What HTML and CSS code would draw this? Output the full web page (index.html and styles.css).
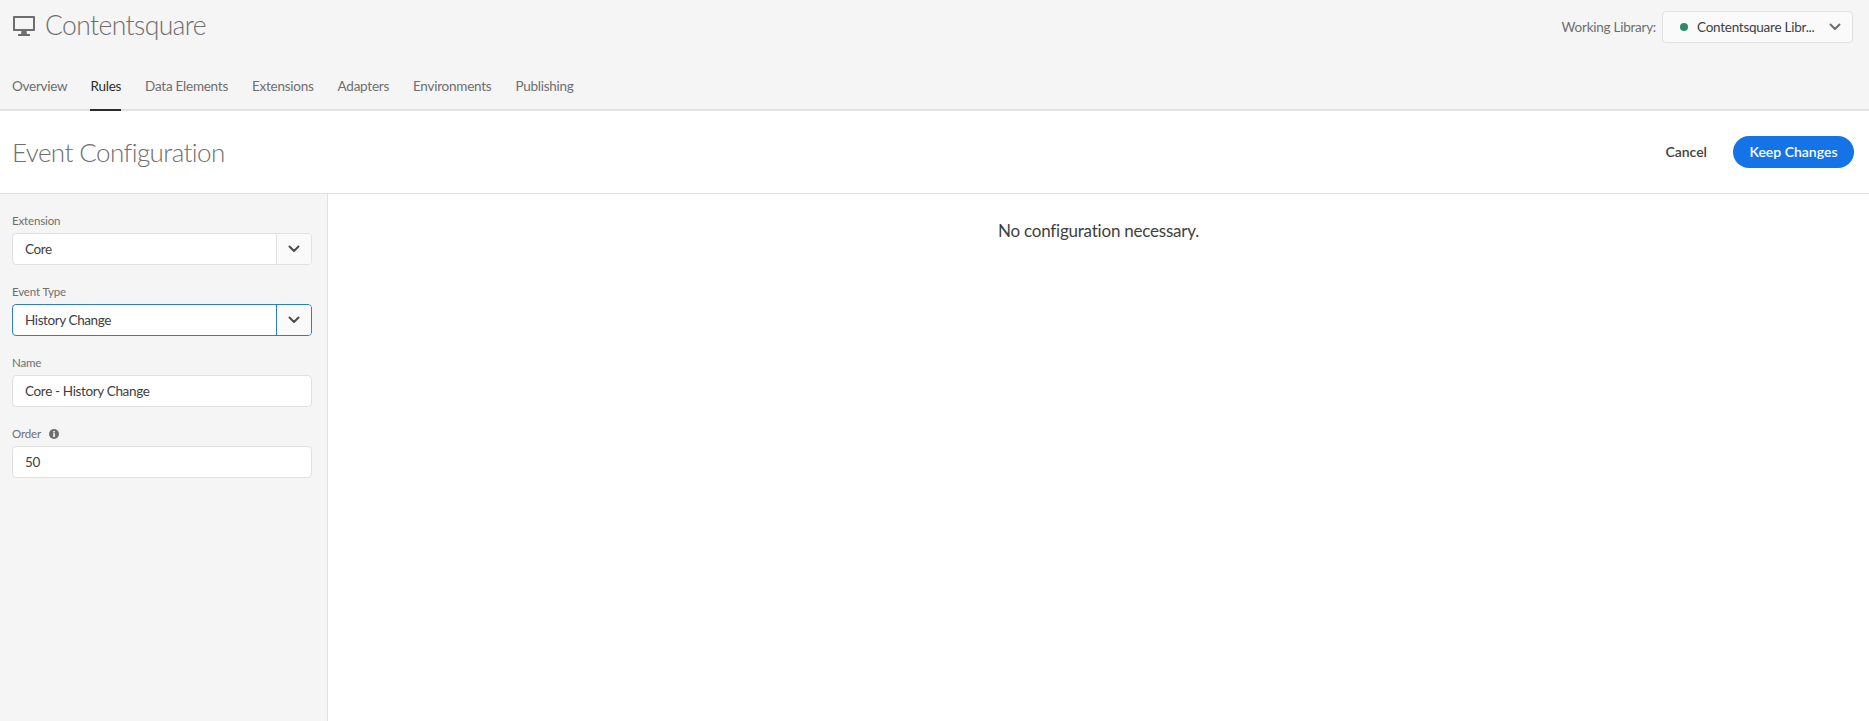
FILE: index.html
```html
<!DOCTYPE html>
<html lang="en">
<head>
<meta charset="utf-8">
<title>Event Configuration</title>
<link rel="stylesheet" href="styles.css">
</head>
<body>
<header class="topbar">
  <div class="topbar-row">
    <div class="brand">
      <svg class="brand-icon" width="22" height="20" viewBox="0 0 22 20"><path fill="#6e6e6e" fill-rule="evenodd" d="M1 0h20c.6 0 1 .4 1 1v13c0 .6-.4 1-1 1H1c-.6 0-1-.4-1-1V1c0-.6.4-1 1-1zm1 2v11h18V2z"/><path fill="#6e6e6e" d="M8.500 15h5l.5 3h3v2H5v-2h3z"/></svg>
      <h1 class="brand-name">Contentsquare</h1>
    </div>
    <div class="library">
      <span class="library-label">Working Library:</span>
      <button class="library-select" type="button">
        <span class="dot"></span>
        <span class="library-name">Contentsquare Libr...</span>
        <svg class="chev" width="12" height="8" viewBox="0 0 12 8"><path d="M1.500 1.500 6 6l4.500-4.500" fill="none" stroke="#6e6e6e" stroke-width="2" stroke-linecap="round" stroke-linejoin="round"/></svg>
      </button>
    </div>
  </div>
  <nav class="tabs">
    <a class="tab">Overview</a>
    <a class="tab active">Rules</a>
    <a class="tab">Data Elements</a>
    <a class="tab">Extensions</a>
    <a class="tab">Adapters</a>
    <a class="tab">Environments</a>
    <a class="tab">Publishing</a>
  </nav>
</header>
<section class="titlebar">
  <h2 class="page-title">Event Configuration</h2>
  <div class="actions">
    <button class="btn-quiet" type="button">Cancel</button>
    <button class="btn-cta" type="button">Keep Changes</button>
  </div>
</section>
<main class="content">
  <aside class="sidebar">
    <div class="field">
      <label class="field-label">Extension</label>
      <div class="combo">
        <span class="combo-value">Core</span>
        <span class="combo-btn"><svg width="12" height="8" viewBox="0 0 12 8"><path d="M1.500 1.500 6 6l4.500-4.500" fill="none" stroke="#4b4b4b" stroke-width="2" stroke-linecap="round" stroke-linejoin="round"/></svg></span>
      </div>
    </div>
    <div class="field">
      <label class="field-label">Event Type</label>
      <div class="combo focused">
        <span class="combo-value">History Change</span>
        <span class="combo-btn"><svg width="12" height="8" viewBox="0 0 12 8"><path d="M1.500 1.500 6 6l4.500-4.500" fill="none" stroke="#4b4b4b" stroke-width="2" stroke-linecap="round" stroke-linejoin="round"/></svg></span>
      </div>
    </div>
    <div class="field">
      <label class="field-label">Name</label>
      <div class="input">Core - History Change</div>
    </div>
    <div class="field">
      <label class="field-label">Order
        <svg class="info" width="10" height="10" viewBox="0 0 10 10"><circle cx="5" cy="5" r="5" fill="#6e6e6e"/><rect x="4.200" y="4.200" width="1.700" height="3.800" fill="#f5f5f5"/><rect x="4.200" y="2" width="1.700" height="1.500" fill="#f5f5f5"/></svg>
      </label>
      <div class="input">50</div>
    </div>
  </aside>
  <section class="panel">
    <p class="panel-msg">No configuration necessary.</p>
  </section>
</main>
</body>
</html>
```
FILE: styles.css
```css
* { box-sizing: border-box; }
html, body { height: 100%; }
body {
  margin: 0;
  display: flex;
  flex-direction: column;
  height: 721px;
  overflow: hidden;
  background: #fff;
  color: #404040;
  font-family: "Lato", "Open Sans", sans-serif;
  font-size: 13.5px;
  letter-spacing: -0.25px;
}
.topbar {
  height: 111px;
  flex: none;
  background: #f5f5f5;
  border-bottom: 2px solid #e1e1e1;
  display: flex;
  flex-direction: column;
  justify-content: space-between;
}
.topbar-row {
  display: flex;
  justify-content: space-between;
  align-items: flex-start;
  padding: 11px 16px 0 13px;
}
.brand { display: flex; align-items: center; gap: 10px; height: 32px; }
.brand-icon { display: block; margin-bottom: 2px; }
.brand-name {
  margin: 0 0 4px;
  font-weight: 300;
  font-size: 26.5px;
  letter-spacing: -0.6px;
  color: #6e6e6e;
}
.library { display: flex; align-items: center; gap: 6px; }
.library-label { color: #6e6e6e; }
.library-select {
  width: 191px;
  height: 32px;
  display: flex;
  align-items: center;
  background: #fafafa;
  border: 1px solid #e1e1e1;
  border-radius: 4px;
  padding: 0 11px 0 17px;
  font: inherit;
  letter-spacing: inherit;
  color: #404040;
}
.dot { width: 8px; height: 8px; border-radius: 50%; background: #268e6c; margin-right: 9px; flex: none; }
.library-name { flex: 1; text-align: left; white-space: nowrap; }
.tabs { display: flex; gap: 24px; padding: 0 11px 0 12px; margin-bottom: -2px; }
.tab {
  display: block;
  height: 36px;
  line-height: 22px;
  color: #6e6e6e;
  border-bottom: 2px solid transparent;
}
.tab:first-child { margin-right: -1px; }
.tab.active { color: #2c2c2c; border-bottom-color: #2c2c2c; }
.titlebar {
  height: 83px;
  flex: none;
  display: flex;
  justify-content: space-between;
  align-items: center;
  padding: 0 15px 0 12px;
  border-bottom: 1px solid #e1e1e1;
}
.page-title {
  margin: 0;
  font-weight: 300;
  font-size: 26px;
  letter-spacing: -0.58px;
  color: #6e6e6e;
}
.actions { display: flex; align-items: center; gap: 26px; }
.btn-quiet {
  background: none;
  border: 0;
  padding: 0 0 2px;
  font: inherit;
  font-weight: 600;
  font-size: 14px;
  letter-spacing: 0;
  color: #404040;
}
.btn-cta {
  width: 121px;
  height: 32px;
  border: 0;
  border-radius: 16px;
  padding: 0 0 2px;
  background: #1473e6;
  color: #fff;
  font: inherit;
  font-weight: 600;
  font-size: 14px;
  letter-spacing: 0;
}
.content { flex: 1; display: flex; min-height: 0; }
.sidebar {
  width: 328px;
  flex: none;
  background: #f5f5f5;
  border-right: 1px solid #e1e1e1;
  padding: 16px 15px 0 12px;
  display: flex;
  flex-direction: column;
  gap: 16px;
}
.field { display: flex; flex-direction: column; }
.field-label {
  height: 23px;
  line-height: 22px;
  font-size: 11.5px;
  letter-spacing: -0.15px;
  color: #6e6e6e;
}
.info { margin-left: 5px; vertical-align: -1px; }
.combo {
  height: 32px;
  display: flex;
  border: 1px solid #e1e1e1;
  border-radius: 4px;
  background: #fff;
  overflow: hidden;
}
.combo-value { flex: 1; padding-left: 12px; line-height: 30px; letter-spacing: -0.4px; }
.combo-btn {
  width: 35px;
  flex: none;
  display: flex;
  align-items: center;
  justify-content: center;
  background: #fafafa;
  border-left: 1px solid #e1e1e1;
}
.combo.focused, .combo.focused .combo-btn { border-color: #2a7fc9; }
.input {
  height: 32px;
  line-height: 30px;
  padding-left: 12px;
  border: 1px solid #e1e1e1;
  border-radius: 4px;
  background: #fff;
  letter-spacing: -0.35px;
}
.panel { flex: 1; }
.panel-msg {
  margin: 0;
  padding-top: 25px;
  text-align: center;
  font-size: 17px;
  letter-spacing: -0.22px;
  line-height: 24px;
}
```
